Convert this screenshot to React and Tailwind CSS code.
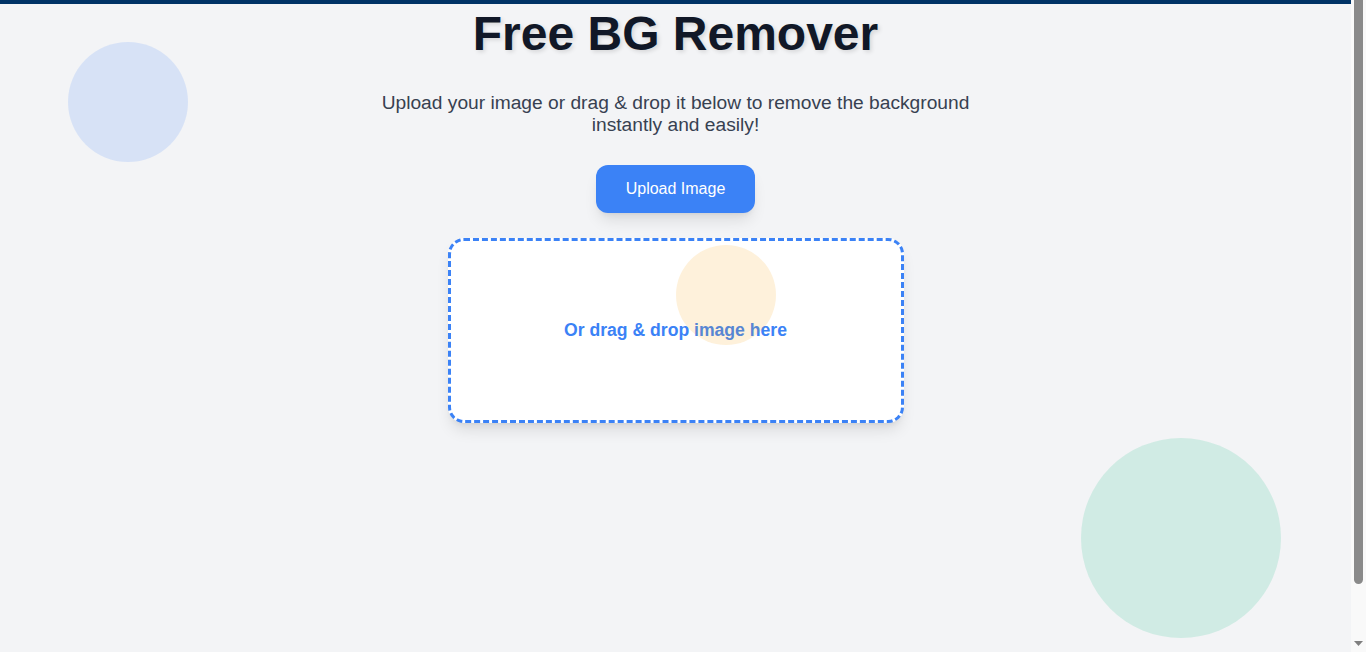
import React from "react";

export default function App() {
  return (
    <div className="flex h-[652px] overflow-hidden bg-[#f3f4f6] font-['Liberation_Sans',Arial,sans-serif]">
      <div className="relative flex-1 overflow-hidden">
        <div className="h-[4px] bg-[#003366]" />
        <main className="flex flex-col items-center pt-[6px]">
          <h1 className="text-5xl leading-none font-bold text-[#111827] [text-shadow:2px_2px_4px_rgba(0,0,0,0.12)]">
            Free BG Remover
          </h1>
          <p className="mt-[34px] max-w-[600px] text-center text-[19.2px] leading-[22px] text-[#374151]">
            Upload your image or drag &amp; drop it below to remove the background instantly and easily!
          </p>
          <button className="mt-[29px] h-[48px] w-[159px] rounded-xl bg-[#3b82f6] text-base text-white shadow-lg">
            Upload Image
          </button>
          <div className="mt-[25px] flex h-[185px] w-[456px] items-center justify-center rounded-2xl border-[3px] border-dashed border-[#3b82f6] bg-white shadow-lg">
            <span className="text-[17.6px] font-bold text-[#3b82f6]">Or drag &amp; drop image here</span>
          </div>
        </main>
        <div className="pointer-events-none absolute left-[68px] top-[42px] h-[120px] w-[120px] rounded-full bg-[#3b82f6]/15" />
        <div className="pointer-events-none absolute left-[676px] top-[245px] h-[100px] w-[100px] rounded-full bg-[#f59e0b]/15" />
        <div className="pointer-events-none absolute left-[1081px] top-[438px] h-[200px] w-[200px] rounded-full bg-[#10b981]/15" />
      </div>
      <div className="flex w-[15px] flex-col items-center bg-[#f9f9f9]">
        <div className="h-[584px] w-[9px] rounded-b-[5px] bg-[#8a8a8a]" />
        <div className="flex-1" />
        <svg width="9" height="5" viewBox="0 0 9 5" className="mb-[6px]">
          <polygon points="0,0 9,0 4.5,5" fill="#7f7f7f" />
        </svg>
      </div>
    </div>
  );
}
